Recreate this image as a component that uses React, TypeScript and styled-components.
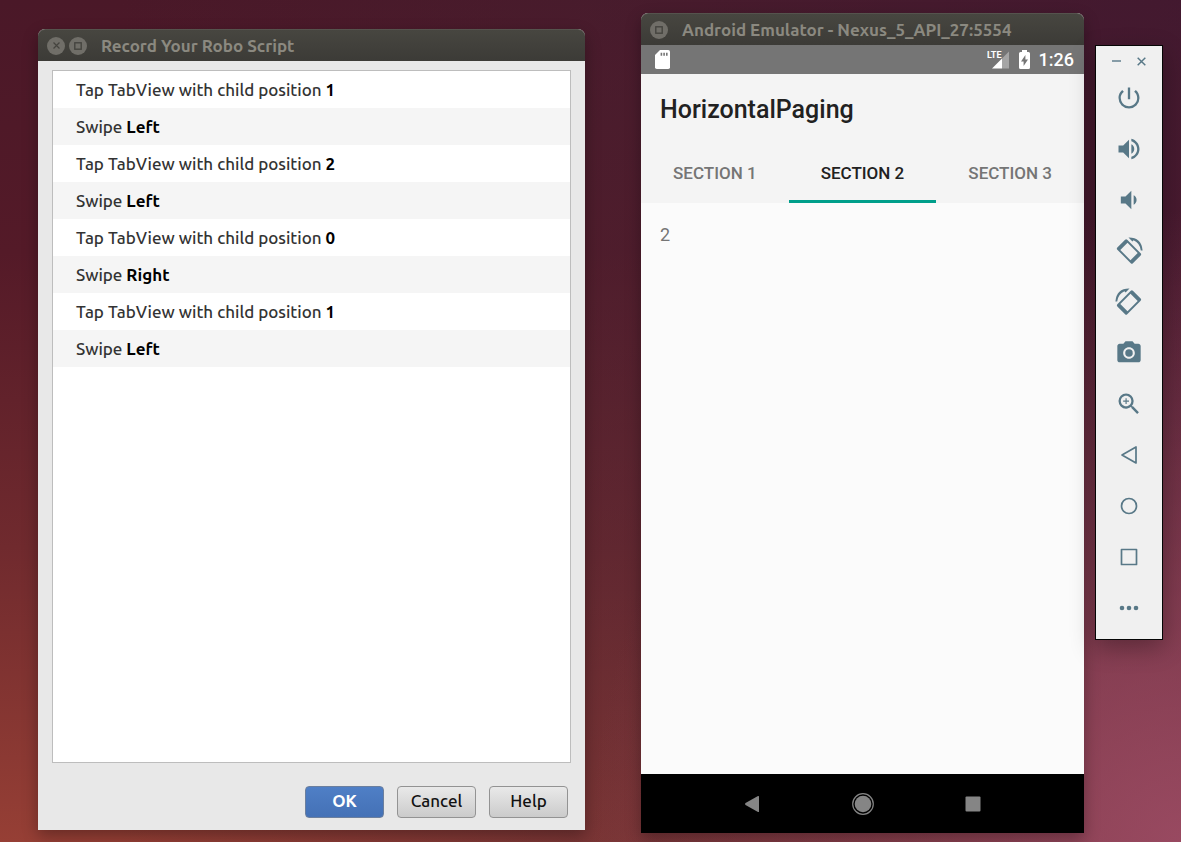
import React from "react";
import styled, { createGlobalStyle, css } from "styled-components";
import {
  MdCameraAlt,
  MdPowerSettingsNew,
  MdVolumeDown,
  MdVolumeUp,
  MdZoomIn,
} from "react-icons/md";

const GlobalStyle = createGlobalStyle`
  *, *::before, *::after { box-sizing: border-box; }
  body { margin: 0; }
  button { font: inherit; border: 0; padding: 0; background: none; color: inherit; cursor: pointer; }
  svg { display: block; }
`;

const desktopFont = `"Ubuntu", "Noto Sans", "Open Sans", sans-serif`;
const phoneFont = `Roboto, sans-serif`;

const Desktop = styled.main`
  display: flex;
  min-height: 100vh;
  padding: 13px 18px 9px 38px;
  font-family: ${desktopFont};
  background:
    radial-gradient(ellipse 50% 75% at 100% 100%, rgba(160, 78, 104, 0.85), rgba(160, 78, 104, 0) 100%),
    linear-gradient(90deg, rgba(68, 34, 52, 0) 10%, rgba(68, 34, 52, 0.35) 50%, rgba(58, 26, 56, 0.45) 100%),
    linear-gradient(180deg, #4a1828 0%, #541a28 30%, #702a2e 65%, #963f35 100%);
`;

const windowFrame = css`
  display: flex;
  flex-direction: column;
  min-width: 0;
  border-radius: 7px 7px 0 0;
  box-shadow: 0 6px 16px rgba(0, 0, 0, 0.3);
`;

const Dialog = styled.section`
  ${windowFrame}
  flex: 547 1 0;
  margin: 16px 0 3px;
  background: #e8e8e8;
`;

const Emulator = styled.section`
  ${windowFrame}
  flex: 443 1 0;
  margin: 0 11px 0 56px;
  background: #fbfbfb;
`;

const TitleBar = styled.header`
  display: flex;
  align-items: center;
  gap: 4px;
  height: 32px;
  padding: 0 9px;
  border-radius: 7px 7px 0 0;
  background: linear-gradient(#474640, #3c3b37);
  border-top: 1px solid #55534d;
  color: #8b8980;
`;

const WindowTitle = styled.h1`
  margin: 0 0 0 10px;
  font-size: 17px;
  line-height: 24px;
  font-weight: 700;
  white-space: nowrap;
`;

const WindowButton = styled.button`
  display: grid;
  place-items: center;
  width: 18px;
  height: 18px;
  border-radius: 50%;
  background: #706e68;
  color: #45443f;
`;

const DialogBody = styled.div`
  display: flex;
  flex: 1;
  flex-direction: column;
  padding: 9px 14px 12px;
`;

const StepList = styled.ol`
  flex: 1;
  margin: 0;
  padding: 0;
  list-style: none;
  background: #fff;
  border: 1px solid #bdbdbd;
`;

const Step = styled.li`
  padding: 0 23px;
  font-size: 17px;
  line-height: 37px;
  font-weight: 500;
  color: #333;

  &:nth-child(even) { background: #f5f5f5; }
  b { font-weight: 700; color: #000; }
`;

const DialogActions = styled.footer`
  display: flex;
  justify-content: flex-end;
  gap: 13px;
  padding: 23px 3px 0;
`;

const ActionButton = styled.button<{ $primary?: boolean }>`
  width: 79px;
  height: 32px;
  padding-bottom: 2px;
  border: 1px solid ${(p) => (p.$primary ? "#6b7f9e" : "#939393")};
  border-radius: 4px;
  font-size: 17px;
  line-height: 24px;
  font-weight: ${(p) => (p.$primary ? 700 : 500)};
  color: ${(p) => (p.$primary ? "#fff" : "#111")};
  background: ${(p) =>
    p.$primary ? "linear-gradient(#4f7fc6, #4471b6)" : "linear-gradient(#e9e9e9, #cbcbcb)"};
`;

const StatusBar = styled.div`
  display: flex;
  align-items: center;
  height: 29px;
  padding: 0 10px 0 14px;
  background: #757575;
  color: #fff;
  font: 500 18px/24px ${phoneFont};
`;

const StatusIcons = styled.div`
  display: flex;
  align-items: center;
  gap: 9px;
  margin-left: auto;
`;

const AppBar = styled.div`
  background: #f4f4f4;
  font-family: ${phoneFont};
`;

const AppTitle = styled.h2`
  margin: 0;
  padding: 20px 19px;
  font-size: 25px;
  line-height: 32px;
  font-weight: 500;
  color: #212121;
`;

const Tabs = styled.div`
  display: grid;
  grid-template-columns: repeat(3, 1fr);
  align-items: center;
`;

const Tab = styled.button<{ $active?: boolean }>`
  display: flex;
  align-items: center;
  height: 57px;
  border-bottom: 3px solid ${(p) => (p.$active ? "#009f8b" : "transparent")};
  font-size: 17px;
  line-height: 30px;
  font-weight: 500;
  color: ${(p) => (p.$active ? "#212121" : "#757575")};

  span { flex: 1; }
  & + & span { border-left: 1px solid #dcdcdc; }
`;

const Page = styled.div`
  flex: 1;
  padding: 20px 19px;
  font: 400 18px/24px ${phoneFont};
  color: #757575;
`;

const NavBar = styled.nav`
  display: flex;
  justify-content: center;
  height: 59px;
  background: #000;
  color: #858585;
`;

const NavButton = styled.button`
  display: grid;
  place-items: center;
  width: 25%;
`;

const Controls = styled.aside`
  flex: 0 0 68px;
  align-self: flex-start;
  margin-top: 32px;
  padding-bottom: 6px;
  border: 1px solid #050505;
  background: #f0f0f0;
  color: #587887;
  box-shadow: 0 8px 24px rgba(0, 0, 0, 0.3);
`;

const ControlsHeader = styled.div`
  display: flex;
  justify-content: center;
  height: 26px;
  padding-top: 3px;
`;

const SmallButton = styled.button`
  display: grid;
  place-items: center;
  width: 25px;
  height: 24px;
`;

const ControlButton = styled.button`
  display: grid;
  place-items: center;
  width: 100%;
  height: 51px;
`;

const MaximizeGlyph = () => (
  <svg width="8" height="8" viewBox="0 0 8 8" fill="none" stroke="currentColor" strokeWidth="1.4">
    <rect x="0.8" y="0.8" width="6.4" height="6.4" />
  </svg>
);

const CloseGlyph = ({ size, weight }: { size: number; weight: number }) => (
  <svg width={size} height={size} viewBox="0 0 8 8" stroke="currentColor" strokeWidth={weight}>
    <path d="M0.6 0.6 7.4 7.4M7.4 0.6 0.6 7.4" />
  </svg>
);

const SdCard = () => (
  <svg width="15" height="19" viewBox="0 0 15 19">
    <path fill="#fff" d="M5 0h8.200q1.800 0 1.800 1.800v15.400q0 1.800-1.800 1.800H1.800q-1.800 0-1.800-1.800V5z" />
    <path fill="#757575" d="M5.600 2.700h1.600v3H5.600zM8.300 2.700h1.600v3H8.300zM11 2.700h1.600v3H11z" />
  </svg>
);

const Signal = () => (
  <svg width="23" height="19" viewBox="0 0 23 19">
    <path fill="#fff" d="M5 18.500 15 8.500v10z" />
    <path fill="#a5a5a5" d="M15 8.500l7-7v17h-7z" />
    <text x="0" y="8" fill="#fff" fontFamily="Roboto, sans-serif" fontWeight="700" fontSize="9">
      LTE
    </text>
  </svg>
);

const Battery = () => (
  <svg width="11" height="19" viewBox="0 0 11 19">
    <path fill="#fff" d="M3 0h5v2h1.500q1.500 0 1.500 1.500v14q0 1.500-1.500 1.500h-8q-1.500 0-1.500-1.500v-14q0-1.500 1.500-1.500H3z" />
    <path fill="#757575" d="M6.400 5v4.500H9L4.600 16v-4.500H2z" />
  </svg>
);

const RotateDevice = ({ flip }: { flip?: boolean }) => (
  <svg width="28" height="28" viewBox="0 0 28 28" fill="currentColor">
    <g transform={flip ? "matrix(-1 0 0 1 28 0)" : undefined}>
      <path
        transform="translate(14 14.5) rotate(45)"
        fillRule="evenodd"
        d="M-9.500-7h19q1.500 0 1.500 1.500v11q0 1.500-1.500 1.500h-19q-1.500 0-1.500-1.500v-11q0-1.500 1.500-1.500zM-7.200-5.100v10.200h14.400v-10.200z"
      />
      <path d="M13.500.6Q26.400.4 27.600 13.500H25.800Q24.800 6 18.600 3.300L17.400 4.500z" />
    </g>
  </svg>
);

const BackOutline = () => (
  <svg width="18" height="20" viewBox="0 0 18 20" fill="none" stroke="currentColor" strokeWidth="1.7" strokeLinejoin="round">
    <path d="M16 2v16L2 10z" />
  </svg>
);

const HomeOutline = () => (
  <svg width="18" height="18" viewBox="0 0 18 18" fill="none" stroke="currentColor" strokeWidth="1.700">
    <circle cx="9" cy="9" r="7.500" />
  </svg>
);

const OverviewOutline = () => (
  <svg width="18" height="18" viewBox="0 0 18 18" fill="none" stroke="currentColor" strokeWidth="1.700" strokeLinejoin="round">
    <rect x="1.500" y="1.500" width="15" height="15" />
  </svg>
);

const MoreDots = () => (
  <svg width="20" height="6" viewBox="0 0 20 6" fill="currentColor">
    <circle cx="3" cy="3" r="2.300" />
    <circle cx="10" cy="3" r="2.300" />
    <circle cx="17" cy="3" r="2.300" />
  </svg>
);

const steps: Array<[string, string]> = [
  ["Tap TabView with child position", "1"],
  ["Swipe", "Left"],
  ["Tap TabView with child position", "2"],
  ["Swipe", "Left"],
  ["Tap TabView with child position", "0"],
  ["Swipe", "Right"],
  ["Tap TabView with child position", "1"],
  ["Swipe", "Left"],
];

const controls: Array<[string, React.ReactNode]> = [
  ["Power", <MdPowerSettingsNew size={28} />],
  ["Volume up", <MdVolumeUp size={28} />],
  ["Volume down", <MdVolumeDown size={28} />],
  ["Rotate left", <RotateDevice />],
  ["Rotate right", <RotateDevice flip />],
  ["Take screenshot", <MdCameraAlt size={28} />],
  ["Zoom", <MdZoomIn size={28} />],
  ["Back", <BackOutline />],
  ["Home", <HomeOutline />],
  ["Overview", <OverviewOutline />],
  ["More", <MoreDots />],
];

export default function App() {
  return (
    <>
      <GlobalStyle />
      <Desktop>
        <Dialog aria-label="Record Your Robo Script">
          <TitleBar>
            <WindowButton aria-label="Close">
              <CloseGlyph size={7} weight={1.4} />
            </WindowButton>
            <WindowButton aria-label="Maximize">
              <MaximizeGlyph />
            </WindowButton>
            <WindowTitle>Record Your Robo Script</WindowTitle>
          </TitleBar>
          <DialogBody>
            <StepList>
              {steps.map(([action, target], i) => (
                <Step key={i}>
                  {action} <b>{target}</b>
                </Step>
              ))}
            </StepList>
            <DialogActions>
              <ActionButton $primary>OK</ActionButton>
              <ActionButton>Cancel</ActionButton>
              <ActionButton>Help</ActionButton>
            </DialogActions>
          </DialogBody>
        </Dialog>

        <Emulator aria-label="Android Emulator">
          <TitleBar>
            <WindowButton aria-label="Maximize">
              <MaximizeGlyph />
            </WindowButton>
            <WindowTitle>Android Emulator - Nexus_5_API_27:5554</WindowTitle>
          </TitleBar>
          <StatusBar>
            <SdCard />
            <StatusIcons>
              <Signal />
              <Battery />
              <span>1:26</span>
            </StatusIcons>
          </StatusBar>
          <AppBar>
            <AppTitle>HorizontalPaging</AppTitle>
            <Tabs role="tablist">
              <Tab role="tab"><span>SECTION 1</span></Tab>
              <Tab role="tab" $active aria-selected><span>SECTION 2</span></Tab>
              <Tab role="tab"><span>SECTION 3</span></Tab>
            </Tabs>
          </AppBar>
          <Page>2</Page>
          <NavBar>
            <NavButton aria-label="Back">
              <svg width="16" height="18" viewBox="0 0 16 18" fill="currentColor">
                <path d="M14 1q1-.4 1 .6v14.800q0 1-1 .6L1.500 10q-1-1 0-2z" />
              </svg>
            </NavButton>
            <NavButton aria-label="Home">
              <svg width="22" height="22" viewBox="0 0 22 22">
                <circle cx="11" cy="11" r="8.300" fill="currentColor" />
                <circle cx="11" cy="11" r="10.300" fill="none" stroke="currentColor" strokeWidth="1.200" />
              </svg>
            </NavButton>
            <NavButton aria-label="Overview">
              <svg width="16" height="16" viewBox="0 0 16 16" fill="currentColor">
                <rect x="0.500" y="0.500" width="15" height="15" rx="1" />
              </svg>
            </NavButton>
          </NavBar>
        </Emulator>

        <Controls aria-label="Emulator controls">
          <ControlsHeader>
            <SmallButton aria-label="Minimize">
              <svg width="9" height="2" viewBox="0 0 9 2">
                <path d="M0 1h9" stroke="currentColor" strokeWidth="1.400" />
              </svg>
            </SmallButton>
            <SmallButton aria-label="Close">
              <CloseGlyph size={9} weight={1.3} />
            </SmallButton>
          </ControlsHeader>
          {controls.map(([label, icon]) => (
            <ControlButton key={label} aria-label={label} title={label}>
              {icon}
            </ControlButton>
          ))}
        </Controls>
      </Desktop>
    </>
  );
}
